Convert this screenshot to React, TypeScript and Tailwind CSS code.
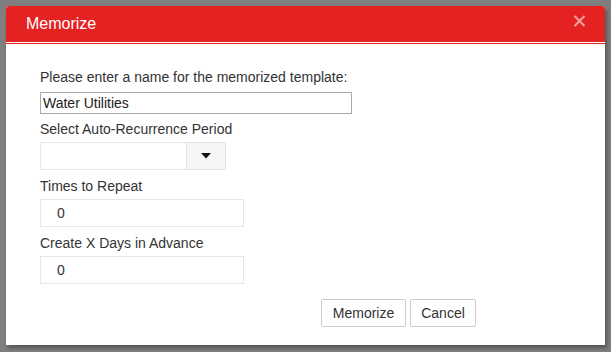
import React from "react";

export default function App() {
  const font = { fontFamily: '"Liberation Sans", Arial, sans-serif' };
  return (
    <div className="w-[611px] h-[352px] bg-[#7f7f7f] pt-[6px] pl-[6px] overflow-hidden" style={font}>
      <div className="w-[599px] h-[339px] bg-white flex flex-col shadow-[2px_3px_4px_rgba(0,0,0,0.35)] rounded-t-[3px]">
        <div className="h-[36px] bg-[#e42222] rounded-t-[3px] flex items-center justify-between pl-[20px] pr-[19px]">
          <span className="text-white text-[16px]">Memorize</span>
          <svg width="13" height="12" viewBox="0 0 13 12" className="mt-[-7px]">
            <path d="M1.5 1 L11.5 11 M11.5 1 L1.5 11" stroke="#f6a3a3" strokeWidth="2" />
          </svg>
        </div>
        <div className="h-[1px] bg-white" />
        <div className="h-[1px] bg-[#e42222]" />
        <div className="flex flex-col pl-[34px] pt-[23px] text-[14px] leading-[20px] text-[#333]">
          <label>Please enter a name for the memorized template:</label>
          <div className="mt-[5px] w-[312px] h-[22px] border border-[#a9a9a9] pl-[2px] flex items-center text-[#222]">
            Water Utilities
          </div>
          <label className="mt-[5px]">Select Auto-Recurrence Period</label>
          <div className="mt-[3px] flex h-[28px] w-[186px]">
            <div className="w-[146px] border border-[#e6e6e6] border-r-0" />
            <div className="w-[40px] bg-[#f5f5f5] border border-[#e6e6e6] flex items-center justify-center">
              <svg width="10" height="6" viewBox="0 0 10 6">
                <path d="M0 0 H10 L5 5.5 Z" fill="#111" />
              </svg>
            </div>
          </div>
          <label className="mt-[6px]">Times to Repeat</label>
          <div className="mt-[3px] w-[204px] h-[28px] border border-[#e6e6e6] pl-[16px] flex items-center">0</div>
          <label className="mt-[6px]">Create X Days in Advance</label>
          <div className="mt-[3px] w-[204px] h-[28px] border border-[#e6e6e6] pl-[16px] flex items-center">0</div>
          <div className="mt-[15px] flex justify-end gap-[4px] pr-[129px]">
            <button className="h-[28px] w-[85px] border border-[#ccc] bg-white rounded-[2px] text-[#333]">Memorize</button>
            <button className="h-[28px] w-[66px] border border-[#ccc] bg-white rounded-[2px] text-[#333]">Cancel</button>
          </div>
        </div>
      </div>
    </div>
  );
}
